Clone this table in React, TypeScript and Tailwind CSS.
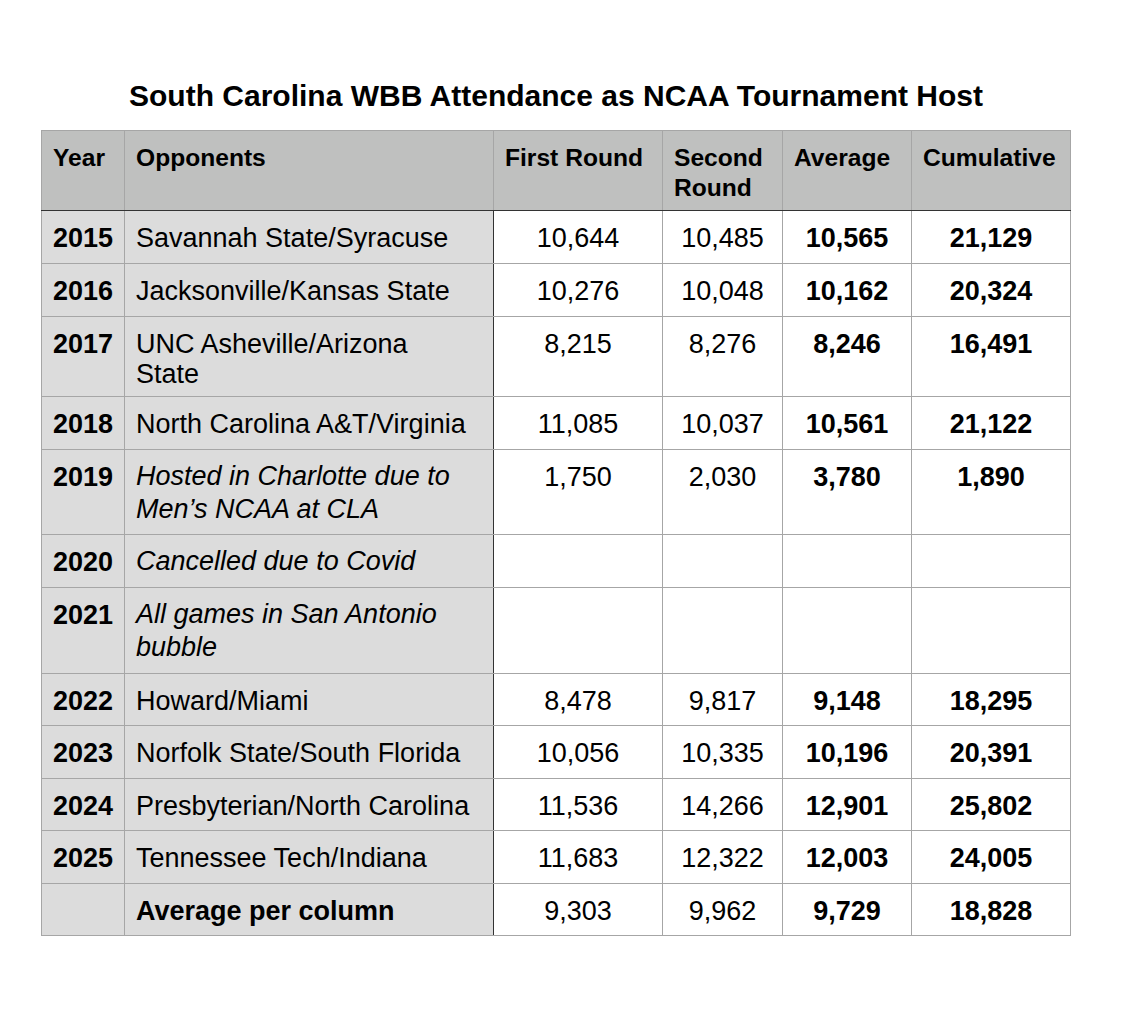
import { Fragment } from 'react';

const rows = [
  { year: '2015', opp: ['Savannah State/Syracuse'], first: '10,644', second: '10,485', avg: '10,565', cum: '21,129', h: 'h-[53px]' },
  { year: '2016', opp: ['Jacksonville/Kansas State'], first: '10,276', second: '10,048', avg: '10,162', cum: '20,324', h: 'h-[53px]' },
  { year: '2017', opp: ['UNC Asheville/Arizona', 'State'], first: '8,215', second: '8,276', avg: '8,246', cum: '16,491', h: 'h-[80px]' },
  { year: '2018', opp: ['North Carolina A&T/Virginia'], first: '11,085', second: '10,037', avg: '10,561', cum: '21,122', h: 'h-[53px]' },
  { year: '2019', opp: ['Hosted in Charlotte due to', 'Men’s NCAA at CLA'], italic: true, first: '1,750', second: '2,030', avg: '3,780', cum: '1,890', h: 'h-[85px]' },
  { year: '2020', opp: ['Cancelled due to Covid'], italic: true, first: '', second: '', avg: '', cum: '', h: 'h-[53px]' },
  { year: '2021', opp: ['All games in San Antonio', 'bubble'], italic: true, first: '', second: '', avg: '', cum: '', h: 'h-[86px]' },
  { year: '2022', opp: ['Howard/Miami'], first: '8,478', second: '9,817', avg: '9,148', cum: '18,295', h: 'h-[52px]' },
  { year: '2023', opp: ['Norfolk State/South Florida'], first: '10,056', second: '10,335', avg: '10,196', cum: '20,391', h: 'h-[53px]' },
  { year: '2024', opp: ['Presbyterian/North Carolina'], first: '11,536', second: '14,266', avg: '12,901', cum: '25,802', h: 'h-[52px]' },
  { year: '2025', opp: ['Tennessee Tech/Indiana'], first: '11,683', second: '12,322', avg: '12,003', cum: '24,005', h: 'h-[53px]' },
];

const cell = 'border border-[#a6a6a6] align-top px-[11px]';

export default function App() {
  return (
    <div className="min-h-screen bg-white pt-[78px] pl-[41px] font-['Liberation_Sans',Arial,sans-serif] text-black">
      <h1 className="w-[1030px] text-center text-[30px] leading-[36px] font-bold mb-[16px]">
        South Carolina WBB Attendance as NCAA Tournament Host
      </h1>

      <table className="border-collapse table-fixed w-[1029px]">
        <colgroup>
          <col className="w-[83px]" />
          <col className="w-[369px]" />
          <col className="w-[169px]" />
          <col className="w-[120px]" />
          <col className="w-[129px]" />
          <col className="w-[159px]" />
        </colgroup>
        <thead>
          <tr className="h-[80px] bg-[#bfc0bf] text-[24.6px] font-bold leading-[30px] text-left">
            <th className={`${cell} border-b-[#333] pt-[12px] font-bold`}>Year</th>
            <th className={`${cell} border-b-[#333] pt-[12px] font-bold`}>Opponents</th>
            <th className={`${cell} border-b-[#333] pt-[12px] font-bold`}>First Round</th>
            <th className={`${cell} border-b-[#333] pt-[12px] font-bold`}>Second Round</th>
            <th className={`${cell} border-b-[#333] pt-[12px] font-bold`}>Average</th>
            <th className={`${cell} border-b-[#333] pt-[12px] font-bold`}>Cumulative</th>
          </tr>
        </thead>
        <tbody className="text-[27px]">
          {rows.map((r) => (
            <tr key={r.year} className={r.h}>
              <td className={`${cell} bg-[#dcdcdc] font-bold leading-[30px] pt-[12px]`}>{r.year}</td>
              <td
                className={`${cell} bg-[#dcdcdc] border-r-[#333] ${
                  r.italic ? 'italic leading-[33px] pt-[10px]' : 'leading-[30px] pt-[12px]'
                }`}
              >
                {r.opp.map((line, i) => (
                  <Fragment key={i}>
                    {i > 0 && <br />}
                    {line}
                  </Fragment>
                ))}
              </td>
              <td className={`${cell} text-center leading-[30px] pt-[12px]`}>{r.first}</td>
              <td className={`${cell} text-center leading-[30px] pt-[12px]`}>{r.second}</td>
              <td className={`${cell} text-center font-bold leading-[30px] pt-[12px]`}>{r.avg}</td>
              <td className={`${cell} text-center font-bold leading-[30px] pt-[12px]`}>{r.cum}</td>
            </tr>
          ))}
          <tr className="h-[52px]">
            <td className={`${cell} bg-[#dcdcdc] leading-[30px] pt-[12px]`}></td>
            <td className={`${cell} bg-[#dcdcdc] border-r-[#333] font-bold leading-[30px] pt-[12px]`}>
              Average per column
            </td>
            <td className={`${cell} text-center leading-[30px] pt-[12px]`}>9,303</td>
            <td className={`${cell} text-center leading-[30px] pt-[12px]`}>9,962</td>
            <td className={`${cell} text-center font-bold leading-[30px] pt-[12px]`}>9,729</td>
            <td className={`${cell} text-center font-bold leading-[30px] pt-[12px]`}>18,828</td>
          </tr>
        </tbody>
      </table>
    </div>
  );
}
